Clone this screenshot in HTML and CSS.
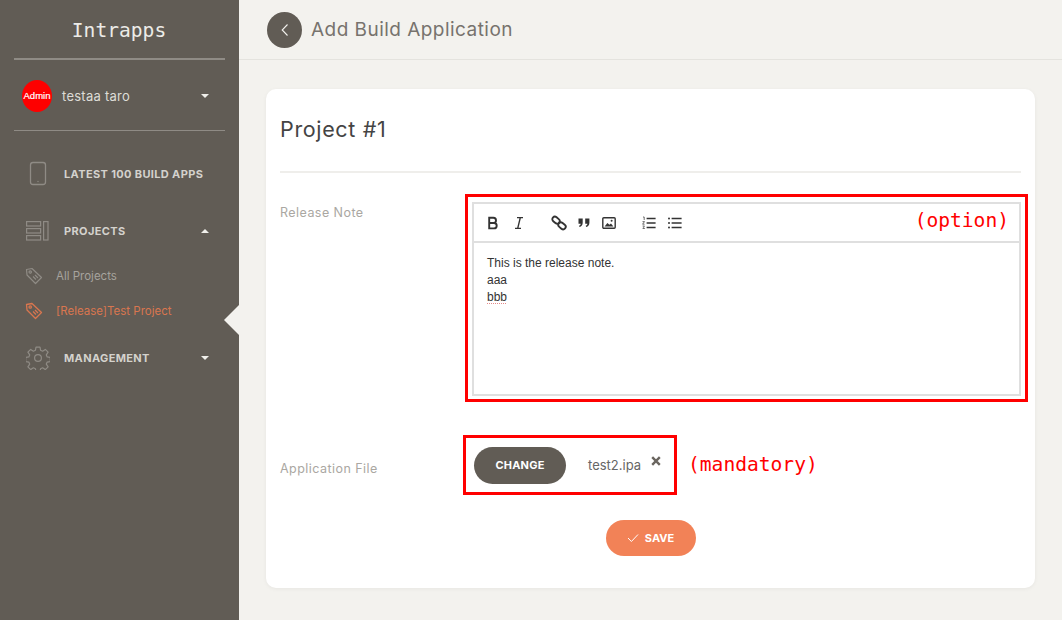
FILE: index.html
```html
<!DOCTYPE html>
<html lang="en">
<head>
<meta charset="utf-8">
<title>Add Build Application</title>
<link rel="stylesheet" href="styles.css">
</head>
<body>
<div class="app">
  <aside class="sidebar">
    <div class="brand">Intrapps</div>
    <div class="user">
      <span class="avatar">Admin</span>
      <span class="user-name">testaa taro</span>
      <span class="caret down"></span>
    </div>
    <nav class="nav">
      <a class="nav-item nav-first">
        <svg class="nav-icon" viewBox="0 0 24 30" width="24" height="30"><rect x="4.5" y="3.5" width="15" height="22" rx="2.5" fill="none" stroke="#8f8b85" stroke-width="1.3"/><circle cx="12" cy="22.5" r=".7" fill="#8f8b85"/></svg>
        <span>LATEST 100 BUILD APPS</span>
      </a>
      <a class="nav-item nav-projects">
        <svg class="nav-icon" viewBox="0 0 24 24" width="24" height="24"><g fill="none" stroke="#8f8b85" stroke-width="1.2"><rect x=".6" y="2.6" width="14" height="4.4"/><rect x=".6" y="9.6" width="14" height="4.4"/><rect x=".6" y="16.6" width="14" height="4.4"/><rect x="17.6" y="2.6" width="4.4" height="18.4"/></g></svg>
        <span>PROJECTS</span>
        <span class="caret up"></span>
      </a>
      <a class="sub-item">
        <svg class="tag" viewBox="0 0 18 18" width="18" height="18"><g fill="none" stroke="#8f8b85" stroke-width="1.2" stroke-linejoin="round"><path d="M1.5 2.5 7 1.5 16.5 10.5 10.5 16.5 2 8z"/><circle cx="5.2" cy="5" r="1.2"/><path d="M8 9.5l3 3M10 8l3 3"/></g></svg>
        <span>All Projects</span>
      </a>
      <a class="sub-item active">
        <svg class="tag" viewBox="0 0 18 18" width="18" height="18"><g fill="none" stroke="#d9764f" stroke-width="1.3" stroke-linejoin="round"><path d="M1.5 2.5 7 1.5 16.5 10.5 10.5 16.5 2 8z"/><circle cx="5.2" cy="5" r="1.2"/><path d="M8 9.5l3 3M10 8l3 3"/></g></svg>
        <span>[Release]Test Project</span>
      </a>
      <a class="nav-item nav-manage">
        <svg class="nav-icon" viewBox="0 0 24 24" width="24" height="24"><g fill="none" stroke="#8f8b85" stroke-width="1.2" stroke-linejoin="round"><path d="M10 1.2h4l.6 3.1 2 .9 2.7-1.8 2.8 2.8-1.8 2.7.9 2 3.1.6v4l-3.1.6-.9 2 1.8 2.7-2.8 2.8-2.7-1.8-2 .9-.6 3.1h-4l-.6-3.1-2-.9-2.7 1.8-2.8-2.8 1.8-2.7-.9-2-3.1-.6v-4l3.1-.6.9-2-1.8-2.7 2.8-2.8 2.7 1.8 2-.9z"/><circle cx="12" cy="12" r="3.4"/></g></svg>
        <span>MANAGEMENT</span>
        <span class="caret down"></span>
      </a>
    </nav>
    <span class="pointer"></span>
  </aside>
  <main class="main">
    <header class="topbar">
      <button class="back" type="button">
        <svg viewBox="0 0 12 16" width="12" height="16"><path d="M8.5 2.5 3.2 8l5.3 5.5" fill="none" stroke="#f3f2ee" stroke-width="1.1"/></svg>
      </button>
      <h1 class="page-title">Add Build Application</h1>
    </header>
    <section class="card">
      <h2 class="card-title">Project #1</h2>
      <div class="row row-note">
        <label class="row-label">Release Note</label>
        <div class="redbox note-box">
          <div class="editor">
            <div class="toolbar">
              <svg class="tb tb-b" viewBox="0 0 14 14" width="14" height="14"><path d="M3.2 1.8h4.2a2.6 2.6 0 0 1 0 5.2H3.2zM3.2 7h4.8a2.7 2.7 0 0 1 0 5.4H3.2z" fill="none" stroke="#333" stroke-width="1.9"/></svg>
              <svg class="tb tb-i" viewBox="0 0 14 14" width="14" height="14"><path d="M5 1.6h6M3 12.4h6M8.3 1.6 5.7 12.4" fill="none" stroke="#333" stroke-width="1.4"/></svg>
              <svg class="tb tb-link" viewBox="0 0 16 16" width="16" height="16"><g fill="none" stroke="#333" stroke-width="1.9"><rect x="1" y="2.6" width="8" height="5.2" rx="2.6" transform="rotate(40 5 5.2)"/><rect x="7" y="8.2" width="8" height="5.2" rx="2.6" transform="rotate(40 11 10.8)"/></g></svg>
              <svg class="tb tb-q" viewBox="0 0 14 14" width="14" height="14"><path d="M1.5 2.5h4.2v4.2c0 2.4-1.2 3.8-3.2 4.3l-.5-1.2c1-.4 1.6-1 1.7-2H1.5zM8.2 2.5h4.2v4.2c0 2.4-1.2 3.8-3.2 4.3l-.5-1.2c1-.4 1.6-1 1.7-2H8.2z" fill="#333"/></svg>
              <svg class="tb tb-img" viewBox="0 0 14 14" width="14" height="14"><rect x=".8" y="1.8" width="12.4" height="10.4" rx="1" fill="none" stroke="#333" stroke-width="1.4"/><path d="M2.6 10.4 5.4 7l2 1.8 1.6-1.2 2.4 2.8z" fill="#333"/><circle cx="9.6" cy="4.8" r="1" fill="#333"/></svg>
              <svg class="tb tb-ol" viewBox="0 0 14 14" width="14" height="14"><path d="M4.6 2.5h9M4.6 7h9M4.6 11.5h9" stroke="#333" stroke-width="1.4"/><path d="M1 1h1.2v3M.5 5.6h2L.6 8.2h2M.6 10h1.9L1.4 11.2l1.2 1.3H.6" fill="none" stroke="#333" stroke-width=".7"/></svg>
              <svg class="tb tb-ul" viewBox="0 0 14 14" width="14" height="14"><path d="M3.6 2.5h10M3.6 7h10M3.6 11.5h10" stroke="#333" stroke-width="1.4"/><circle cx="1" cy="2.5" r="1" fill="#333"/><circle cx="1" cy="7" r="1" fill="#333"/><circle cx="1" cy="11.5" r="1" fill="#333"/></svg>
              <span class="note-tag">(option)</span>
            </div>
            <div class="editor-body">
              <div>This is the release note.</div>
              <div>aaa</div>
              <div><span class="spell">bbb</span></div>
            </div>
          </div>
        </div>
      </div>
      <div class="row row-file">
        <label class="row-label">Application File</label>
        <div class="redbox file-box">
          <button class="change" type="button">CHANGE</button>
          <span class="file-name">test2.ipa</span>
          <svg class="remove" viewBox="0 0 10 10" width="10" height="10"><path d="M1.2 1.2l7.6 7.6M8.8 1.2 1.2 8.8" stroke="#6a655f" stroke-width="2.4"/></svg>
        </div>
        <span class="note-tag note-mandatory">(mandatory)</span>
      </div>
      <div class="actions">
        <button class="save" type="button">
          <svg viewBox="0 0 12 10" width="12" height="10"><path d="M1 5l3.4 3.5L11 1.5" fill="none" stroke="#fff" stroke-width="1"/></svg>
          <span>SAVE</span>
        </button>
      </div>
    </section>
  </main>
</div>
</body>
</html>
```
FILE: styles.css
```css
* { box-sizing: border-box; }
html, body { margin: 0; height: 100%; }
body { font-family: "Inter", "Liberation Sans", sans-serif; background: #f3f2ee; overflow: hidden; }
.app { display: flex; width: 1062px; height: 620px; }

.sidebar { position: relative; width: 239px; flex: none; background: #615c55; padding: 0 14px; color: #e6e4df; }
.brand { height: 60px; border-bottom: 2px solid #8f8b85; font: 19.6px/61px "DejaVu Sans Mono", monospace; text-align: center; color: #ecebe7; padding-right: 1px; }
.user { display: flex; align-items: center; height: 71px; border-bottom: 1px solid #8f8b85; padding: 1px 16px 0 8px; }
.avatar { width: 30px; height: 32px; border-radius: 50%; background: #fe0000; color: #fff; font: 9.5px/32px "Liberation Sans", sans-serif; -webkit-text-stroke: .2px #fff; text-align: center; flex: none; }
.user-name { flex: 1; margin-left: 10px; font-size: 13px; letter-spacing: .25px; color: #dedcd7; }
.caret { width: 0; height: 0; border-left: 4px solid transparent; border-right: 4px solid transparent; }
.caret.down { border-top: 4px solid #f0efeb; }
.caret.up { border-bottom: 4px solid #f0efeb; }
.nav { display: flex; flex-direction: column; }
.nav-item { display: flex; align-items: center; height: 30px; padding: 0 16px 0 12px; font-size: 11px; font-weight: 700; letter-spacing: .36px; color: #d4d2cd; }
.nav-item span:first-of-type { flex: 1; margin-left: 14px; }
.nav-first { margin-top: 28px; }
.nav-projects { margin-top: 27px; }
.nav-manage { margin-top: 15px; }
.sub-item { display: flex; align-items: center; height: 35px; padding-left: 11px; font-size: 11.5px; color: #a6a39d; }
.sub-item span { margin-left: 13px; }
.nav-projects + .sub-item { margin-top: 12px; }
.sub-item.active { color: #d9764f; }
.pointer { position: absolute; right: 0; top: 305px; width: 0; height: 0; border-top: 15px solid transparent; border-bottom: 15px solid transparent; border-right: 15px solid #f3f2ee; }

.main { flex: 1; min-width: 0; }
.topbar { display: flex; align-items: center; height: 60px; padding-left: 28px; border-bottom: 1px solid #e4e3de; }
.back { width: 35px; height: 36px; border: 0; border-radius: 50%; background: #615c55; padding: 0; display: flex; align-items: center; justify-content: center; }
.page-title { margin: 0 0 0 9px; font-size: 19px; font-weight: 400; letter-spacing: .46px; color: #77736d; }
.card { margin: 29px 0 0 27px; width: 769px; height: 499px; background: #fff; border-radius: 10px; padding: 0 14px; box-shadow: 0 1px 4px rgba(0,0,0,.05); }
.card-title { margin: 0; height: 84px; border-bottom: 2px solid #efeeeb; font-size: 21.5px; font-weight: 400; letter-spacing: .65px; line-height: 80px; color: #444; }
.row { display: flex; }
.row-label { width: 185px; flex: none; font-size: 12.5px; letter-spacing: .45px; color: #aaa7a2; }
.row-note { margin-top: 21px; }
.row-note .row-label { padding-top: 11px; }
.redbox { border: 3px solid #f00; background: #fff; }
.note-box { width: 563px; height: 208px; padding: 5px 4px 3px; margin-right: -7px; }
.editor { height: 100%; border: 2px solid #dfdfdf; }
.toolbar { display: flex; align-items: center; height: 39px; padding-left: 12px; border-bottom: 2px solid #dfdfdf; }
.tb { flex: none; }
.tb-i { margin-left: 12px; }
.tb-link { margin-left: 25px; }
.tb-q { margin-left: 10px; }
.tb-img { margin-left: 11px; }
.tb-ol { margin-left: 26px; }
.tb-ul { margin-left: 12px; }
.note-tag { font: 19.6px/1 "DejaVu Sans Mono", monospace; color: #f00; }
.toolbar .note-tag { margin-left: auto; margin-right: 10px; margin-top: -3px; }
.editor-body { padding: 12px 13px; font: 12px/17px "Liberation Sans", sans-serif; color: #333; }
.spell { text-decoration: underline dotted #e58a8a 1px; text-underline-offset: 2px; }
.row-file { margin-top: 33px; align-items: center; }
.row-file .row-label { width: 183px; padding-top: 7px; }
.file-box { display: flex; align-items: center; width: 214px; height: 60px; padding-left: 8px; position: relative; }
.change { width: 92px; height: 37px; border: 0; border-radius: 18.5px; background: #615c55; color: #fff; font: 700 11px "Inter", sans-serif; letter-spacing: .2px; }
.file-name { margin-left: 22px; font-size: 13px; color: #666; }
.remove { margin: -8px 0 0 10px; flex: none; }
.note-mandatory { margin-left: 11px; }
.actions { display: flex; justify-content: center; margin-top: 25px; }
.save { display: flex; align-items: center; justify-content: center; gap: 6px; width: 90px; height: 36px; border: 0; border-radius: 18px; background: #f28257; color: #fff; font: 700 11px "Inter", sans-serif; }
```
